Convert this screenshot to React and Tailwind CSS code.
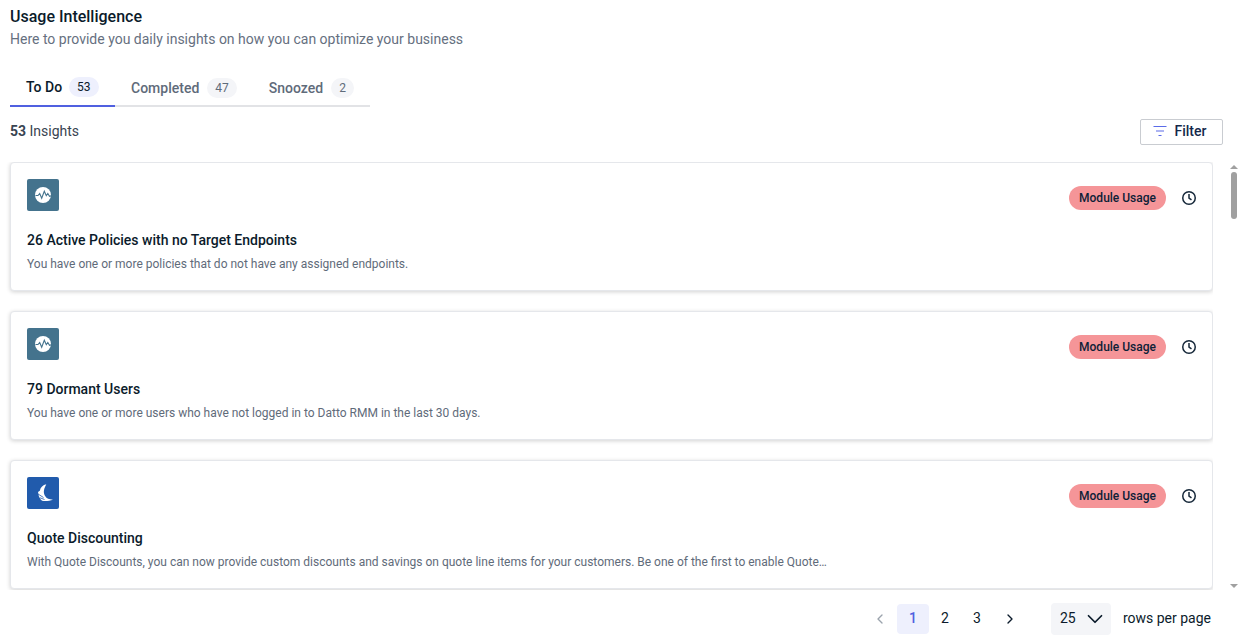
import { ChevronLeft, ChevronRight, ChevronDown } from "lucide-react";

const tabs = [
  { label: "To Do", count: 53, active: true },
  { label: "Completed", count: 47 },
  { label: "Snoozed", count: 2 },
];

const insights = [
  {
    title: "26 Active Policies with no Target Endpoints",
    text: "You have one or more policies that do not have any assigned endpoints.",
    icon: "pulse",
  },
  {
    title: "79 Dormant Users",
    text: "You have one or more users who have not logged in to Datto RMM in the last 30 days.",
    icon: "pulse",
  },
  {
    title: "Quote Discounting",
    text: "With Quote Discounts, you can now provide custom discounts and savings on quote line items for your customers. Be one of the first to enable Quote…",
    icon: "bird",
  },
];

function PulseIcon() {
  return (
    <div className="w-8 h-8 rounded-[2px] bg-[#44738d] flex items-center justify-center">
      <svg width="16" height="16" viewBox="0 0 16 16">
        <circle cx="8" cy="8" r="8" fill="#fff" />
        <path
          d="M0.500 8.500H3L4.700 6.500 6.700 11.300 9.300 4.300 11.300 8.700 12.800 6.500 14.500 9.300 16 8.800"
          fill="none"
          stroke="#44738d"
          strokeWidth="1.100"
        />
      </svg>
    </div>
  );
}

function BirdIcon() {
  return (
    <div className="w-8 h-8 rounded-[2px] bg-[#215bac] flex items-center justify-center">
      <svg width="20" height="20" viewBox="0 0 20 20">
        <path d="M13.300 1.300C10 2 7.500 4.200 6.800 7.800L5 9 5.800 13C7 16 8.500 18 10.700 18 14 18.200 17 17.800 20 16.700 16 16.500 13.500 15.500 12.300 13.300 10.500 10.500 10 7.500 13.300 1.300z" fill="#fff" />
        <path d="M5 11L10.500 14.500M7 14.800L11.500 16.500" stroke="#215bac" strokeWidth="0.800" fill="none" />
      </svg>
    </div>
  );
}

function FilterIcon() {
  return (
    <svg width="14" height="12" viewBox="0 0 14 12" fill="none" stroke="#5b6be8" strokeWidth="1.2">
      <path d="M0.500 1.500h13M3 6h8M5.500 10.500h3" />
    </svg>
  );
}

function ClockIcon() {
  return (
    <svg width="16" height="16" viewBox="0 0 16 16" fill="none" stroke="#16283a" strokeWidth="1.5">
      <circle cx="8" cy="8" r="6.250" />
      <path d="M8 4v4l2.500 1.800" />
    </svg>
  );
}

function InsightCard({ item }) {
  return (
    <div className="h-[129px] shrink-0 bg-white rounded-[4px] border border-[#e5e7eb] shadow-[0_1px_4px_rgba(0,0,0,0.18)] pl-4 pr-[15px] pt-4 flex flex-col">
      <div className="flex justify-between items-start h-8">
        {item.icon === "pulse" ? <PulseIcon /> : <BirdIcon />}
        <div className="flex items-center gap-[15px] pt-[7px]">
          <span className="h-6 px-[10px] rounded-full bg-[#f59598] text-xs font-medium leading-6 text-[#0d2137]">
            Module Usage
          </span>
          <ClockIcon />
        </div>
      </div>
      <h3 className="mt-[19px] text-sm leading-5 font-medium text-[#0b1b2b]">{item.title}</h3>
      <p className="mt-[6px] text-xs leading-4 text-[#5f6b7a]">{item.text}</p>
    </div>
  );
}

export default function App() {
  return (
    <div className="w-[1239px] h-[644px] overflow-hidden bg-white flex flex-col font-['Roboto',sans-serif]">
      <div className="pl-[10px] pt-[6px]">
        <h1 className="text-base leading-[22px] font-medium text-[#0b1b2b]">Usage Intelligence</h1>
        <p className="text-sm leading-[22px] text-[#66707f]">
          Here to provide you daily insights on how you can optimize your business
        </p>
      </div>

      <div className="ml-[10px] mt-[20px] w-[360px] h-[37px] flex border-b-2 border-[#e2e3e6]">
        {tabs.map((t) => (
          <div
            key={t.label}
            className={`h-[37px] px-4 pb-[2px] flex items-center text-sm font-medium whitespace-nowrap ${
              t.active ? "w-[105px] gap-[7px] border-b-2 border-[#5060e0] text-[#0b1b2b]" : "gap-2 text-[#5f6b7a]"
            }`}
          >
            {t.label}
            <span
              className={`h-5 min-w-5 px-2 rounded-full text-xs font-normal leading-5 text-center ${
                t.active ? "bg-[#eef0fd] text-[#0b1b2b]" : "bg-[#f4f5f8] text-[#5f6b7a]"
              }`}
            >
              {t.count}
            </span>
          </div>
        ))}
      </div>

      <div className="mt-[10px] pl-[10px] pr-4 h-[28px] flex items-center justify-between">
        <span className="text-sm text-[#394452]">
          <span className="font-bold">53</span> Insights
        </span>
        <button className="w-[83px] h-[26px] mt-[2px] pb-[2px] pr-[4px] border border-[#c9ccd1] rounded-[2px] flex items-center justify-center gap-[8px] text-sm font-medium text-[#14284b]">
          <FilterIcon />
          Filter
        </button>
      </div>

      <div className="mt-[17px] h-[428px] flex">
        <div className="w-[1213px] pl-[10px] flex flex-col gap-[20px] overflow-hidden pb-1">
          {insights.map((item) => (
            <InsightCard key={item.title} item={item} />
          ))}
        </div>
        <div className="ml-[16px] w-[10px] flex flex-col items-center justify-between">
          <div className="flex flex-col items-center pt-[3px] gap-[3px]">
            <div className="w-0 h-0 border-x-[4px] border-x-transparent border-b-[4px] border-b-[#a0a0a0]" />
            <div className="w-[6px] h-[47px] rounded-full bg-[#a0a0a0]" />
          </div>
          <div className="w-0 h-0 mb-[2px] border-x-[4px] border-x-transparent border-t-[4px] border-t-[#a0a0a0]" />
        </div>
      </div>

      <div className="mt-[13px] pr-[28px] flex items-center justify-end text-sm text-[#0b1b2b]">
        <ChevronLeft size={16} className="text-[#9ba3ad] mr-[9px]" />
        <span className="w-8 h-[30px] pb-[2px] rounded-[4px] bg-[#eef0fd] text-[#5060e0] font-medium flex items-center justify-center">1</span>
        <span className="w-8 h-[30px] pb-[2px] flex items-center justify-center">2</span>
        <span className="w-8 h-[30px] pb-[2px] flex items-center justify-center">3</span>
        <ChevronRight size={16} className="ml-[9px] mr-[33px]" />
        <div className="w-[60px] h-8 rounded-[4px] bg-[#f4f5f8] flex items-center justify-between pl-[9px] pr-[3px]">
          <span className="pb-[2px]">25</span>
          <ChevronDown size={26} strokeWidth={1.6} />
        </div>
        <span className="ml-3 pb-[2px]">rows per page</span>
      </div>
    </div>
  );
}
